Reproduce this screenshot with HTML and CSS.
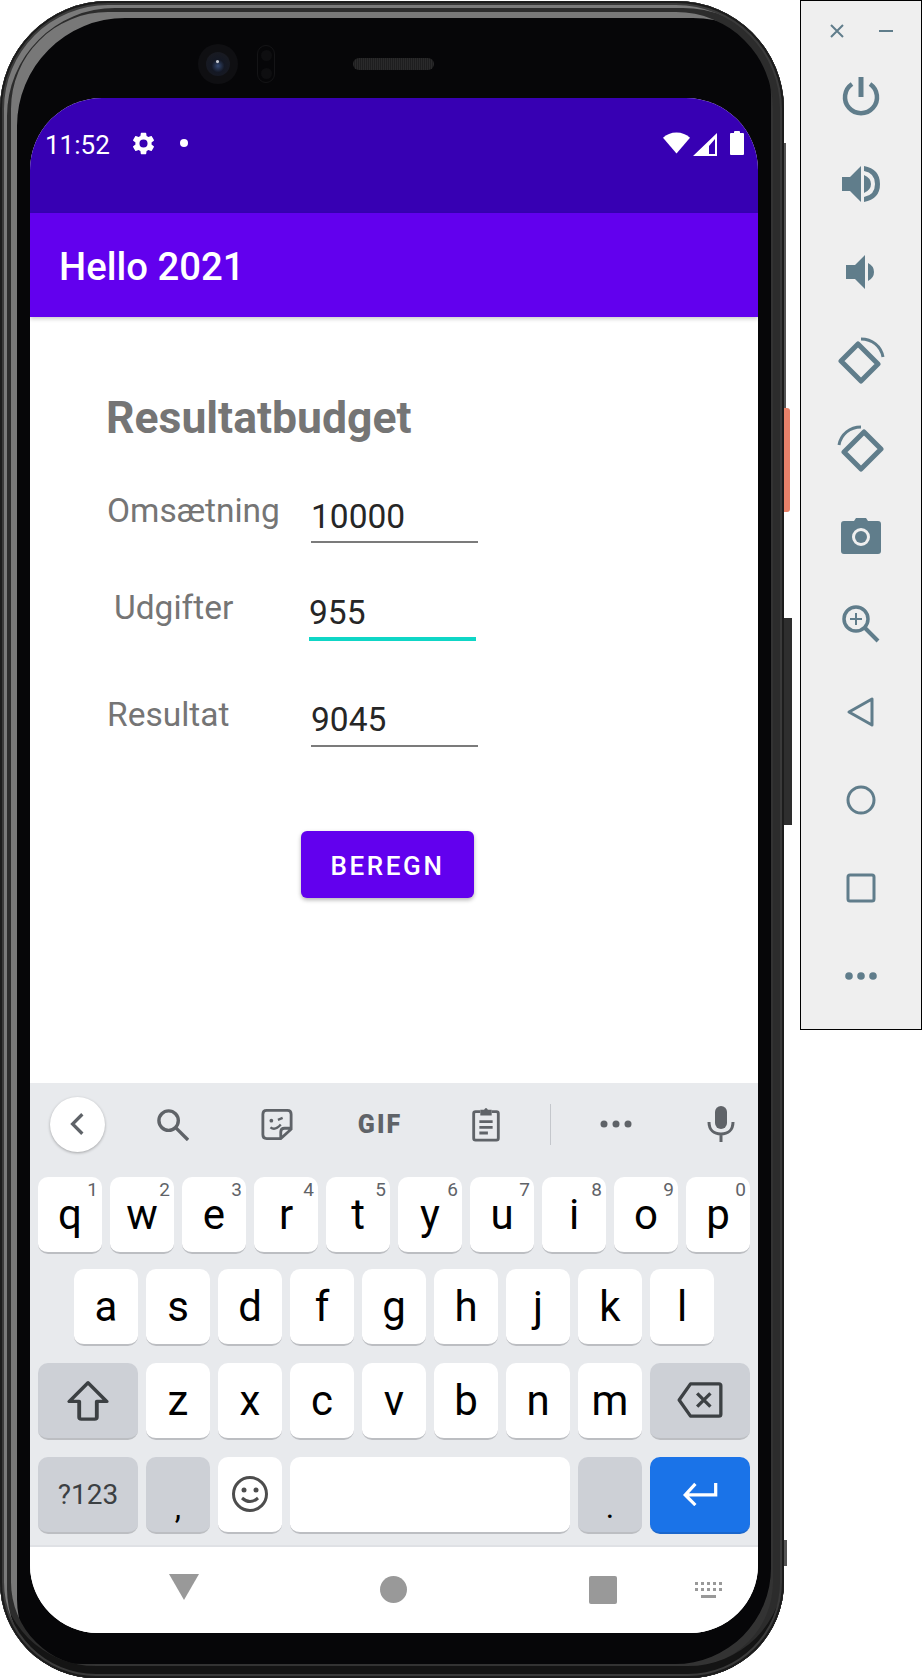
FILE: index.html
```html
<!DOCTYPE html>
<html lang="en">
<head>
    <meta charset="UTF-8">
    <meta name="viewport" content="width=device-width, initial-scale=1.0">
    <title>Hello 2021</title>
    <link rel="stylesheet" href="styles.css">
</head>
<body>
    <div class="phone">
        <span class="side-btn side-long"></span>
        <span class="side-btn side-power"></span>
        <span class="side-btn side-volume"></span>
        <span class="side-btn side-low"></span>

        <div class="bezel-top">
            <div class="camera"><span class="lens"></span></div>
            <div class="sensor"><span></span><span></span></div>
            <div class="speaker"></div>
        </div>

        <div class="screen">
            <div class="status-bar">
                <span class="clock">11:52</span>
                <svg class="status-gear" viewBox="0 0 24 24" width="27" height="27"><path fill="#fff" d="M19.14 12.94c.04-.3.06-.61.06-.94 0-.32-.02-.64-.07-.94l2.03-1.58a.49.49 0 0 0 .12-.61l-1.92-3.32a.488.488 0 0 0-.59-.22l-2.39.96c-.5-.38-1.03-.7-1.62-.94l-.36-2.54a.484.484 0 0 0-.48-.41h-3.84c-.24 0-.43.17-.47.41l-.36 2.54c-.59.24-1.13.57-1.62.94l-2.39-.96c-.22-.08-.47 0-.59.22L2.74 8.87c-.12.21-.08.47.12.61l2.03 1.58c-.05.3-.09.63-.09.94s.02.64.07.94l-2.03 1.58a.49.49 0 0 0-.12.61l1.92 3.32c.12.22.37.29.59.22l2.39-.96c.5.38 1.03.7 1.62.94l.36 2.54c.05.24.24.41.48.41h3.84c.24 0 .44-.17.47-.41l.36-2.54c.59-.24 1.13-.56 1.62-.94l2.39.96c.22.08.47 0 .59-.22l1.92-3.32c.12-.22.07-.47-.12-.61l-2.01-1.58zM12 15.6A3.6 3.6 0 1 1 12 8.4a3.6 3.6 0 0 1 0 7.2z"/></svg>
                <span class="status-dot"></span>
                <span class="status-fill"></span>
                <svg class="status-wifi" viewBox="0 0 28 24" width="27" height="24"><path fill="#fff" d="M0 6.500C3.500 3 8.500 1 14 1s10.500 2 14 5.500L14 23z"/></svg>
                <svg class="status-signal" viewBox="0 0 24 24" width="24" height="24"><path fill="#fff" fill-rule="evenodd" d="M24 0v23H0zM22 6L16 13v8h6z"/></svg>
                <svg class="status-battery" viewBox="0 0 14 24" width="14" height="24"><path fill="#fff" d="M4 2V1q0-1 1-1h4q1 0 1 1v1h3q1 0 1 1v20q0 1-1 1H1q-1 0-1-1V3q0-1 1-1z"/></svg>
            </div>
            <header class="app-bar">Hello 2021</header>

            <main class="form">
                <h1 class="form-title">Resultatbudget</h1>
                <div class="form-row row-revenue">
                    <label class="row-label">Omsætning</label>
                    <div class="field">10000</div>
                </div>
                <div class="form-row row-costs">
                    <label class="row-label">Udgifter</label>
                    <div class="field field-active">955</div>
                </div>
                <div class="form-row row-result">
                    <label class="row-label">Resultat</label>
                    <div class="field">9045</div>
                </div>
                <button class="calc-btn">BEREGN</button>
            </main>

            <div class="keyboard">
                <div class="kb-tools">
                    <span class="kb-back">
                        <svg viewBox="0 0 24 24" width="26" height="26"><path fill="none" stroke="#5f6368" stroke-width="3" d="M16 3l-9 9 9 9"/></svg>
                    </span>
                    <svg class="tool-search" viewBox="0 0 34 34" width="33" height="33"><circle cx="13" cy="13" r="10" fill="none" stroke="#5f6368" stroke-width="3.500"/><path stroke="#5f6368" stroke-width="3.500" d="M20 20l13 13"/></svg>
                    <svg class="tool-sticker" viewBox="0 0 34 34" width="32" height="33"><path fill="none" stroke="#5f6368" stroke-width="3" d="M6 2h22q4 0 4 4v16L21 32H6q-4 0-4-4V6q0-4 4-4zM32 21h-7q-4 0-4 4v7"/><circle cx="11" cy="13" r="2" fill="#5f6368"/><path fill="none" stroke="#5f6368" stroke-width="2.500" d="M18 12l5-2M10 20q5 4 11-3"/></svg>
                    <span class="tool-gif">GIF</span>
                    <svg class="tool-clip" viewBox="0 0 30 38" width="30" height="36"><path fill="none" stroke="#5f6368" stroke-width="3" d="M9 6H4q-2 0-2 2v26q0 2 2 2h22q2 0 2-2V8q0-2-2-2h-5"/><path fill="#5f6368" d="M9 4h4q2-4 4 0h4v6H9zM8 15h14v3H8zM8 21h14v3H8zM8 27h9v3H8z"/></svg>
                    <span class="tool-divider"></span>
                    <svg class="tool-dots" viewBox="0 0 32 8" width="32" height="8"><circle cx="4" cy="4" r="3.500" fill="#5f6368"/><circle cx="16" cy="4" r="3.500" fill="#5f6368"/><circle cx="28" cy="4" r="3.500" fill="#5f6368"/></svg>
                    <svg class="tool-mic" viewBox="0 0 28 36" width="28" height="36"><rect x="8" y="0" width="12" height="23" rx="6" fill="#5f6368"/><path fill="none" stroke="#5f6368" stroke-width="3" d="M2 16c0 8 5 12 12 12s12-4 12-12M14 28v8"/></svg>
                </div>
                <div class="kb-row kb-row-top">
                    <span class="key"><sup>1</sup>q</span>
                    <span class="key"><sup>2</sup>w</span>
                    <span class="key"><sup>3</sup>e</span>
                    <span class="key"><sup>4</sup>r</span>
                    <span class="key"><sup>5</sup>t</span>
                    <span class="key"><sup>6</sup>y</span>
                    <span class="key"><sup>7</sup>u</span>
                    <span class="key"><sup>8</sup>i</span>
                    <span class="key"><sup>9</sup>o</span>
                    <span class="key"><sup>0</sup>p</span>
                </div>
                <div class="kb-row kb-row-home">
                    <span class="key">a</span>
                    <span class="key">s</span>
                    <span class="key">d</span>
                    <span class="key">f</span>
                    <span class="key">g</span>
                    <span class="key">h</span>
                    <span class="key">j</span>
                    <span class="key">k</span>
                    <span class="key">l</span>
                </div>
                <div class="kb-row">
                    <span class="key key-wide key-grey">
                        <svg viewBox="0 0 40 44" width="44" height="41" preserveAspectRatio="none"><path fill="none" stroke="#3c4043" stroke-width="3.500" stroke-linejoin="round" d="M20 3L3 23h9v17q0 2 2 2h12q2 0 2-2V23h9z"/></svg>
                    </span>
                    <span class="key">z</span>
                    <span class="key">x</span>
                    <span class="key">c</span>
                    <span class="key">v</span>
                    <span class="key">b</span>
                    <span class="key">n</span>
                    <span class="key">m</span>
                    <span class="key key-wide key-grey">
                        <svg viewBox="0 0 48 38" width="46" height="36"><path fill="none" stroke="#3c4043" stroke-width="3.500" stroke-linejoin="round" d="M14 2h30q2 0 2 2v30q0 2-2 2H14L2 19z"/><path fill="none" stroke="#3c4043" stroke-width="3.500" d="M21 12l14 14M35 12L21 26"/></svg>
                    </span>
                </div>
                <div class="kb-row">
                    <span class="key key-wide key-grey key-sym">?123</span>
                    <span class="key key-grey key-mark">,</span>
                    <span class="key">
                        <svg viewBox="0 0 38 38" width="38" height="38"><circle cx="19" cy="19" r="16.500" fill="none" stroke="#4d4d4d" stroke-width="3"/><circle cx="13" cy="15" r="2.500" fill="#4d4d4d"/><circle cx="25" cy="15" r="2.500" fill="#4d4d4d"/><path fill="none" stroke="#4d4d4d" stroke-width="3" d="M11 23q8 7 16 0"/></svg>
                    </span>
                    <span class="key key-space"></span>
                    <span class="key key-grey key-mark">.</span>
                    <span class="key key-wide key-enter">
                        <svg viewBox="0 0 38 26" width="36" height="24"><path fill="none" stroke="#fff" stroke-width="3.500" d="M36 1v13H4M14 2L3 14l11 11"/></svg>
                    </span>
                </div>
            </div>

            <div class="nav-bar">
                <span class="nav-back"></span>
                <span class="nav-home"></span>
                <span class="nav-recent"></span>
                <svg class="nav-kb" viewBox="0 0 28 16" width="28" height="16"><path fill="#999" d="M0 0h3v3H0zM6 0h3v3H6zM12 0h3v3h-3zM18 0h3v3h-3zM24 0h3v3h-3zM0 6h3v3H0zM6 6h3v3H6zM12 6h3v3h-3zM18 6h3v3h-3zM24 6h3v3h-3zM6 13h15v3H6z"/></svg>
            </div>
        </div>
    </div>

    <aside class="emu-panel">
        <div class="emu-window">
            <svg viewBox="0 0 16 16" width="16" height="16"><path stroke="#607d8b" stroke-width="2" d="M2 2l12 12M14 2L2 14"/></svg>
            <svg viewBox="0 0 16 16" width="16" height="16"><path stroke="#607d8b" stroke-width="2" d="M1 8h14"/></svg>
        </div>
        <div class="emu-tools">
            <svg viewBox="0 0 40 40" width="40" height="40"><path fill="none" stroke="#607d8b" stroke-width="4.500" d="M11 8a16 16 0 1 0 18 0"/><path stroke="#607d8b" stroke-width="5" d="M20 1v20"/></svg>
            <svg viewBox="0 0 40 40" width="40" height="40"><path fill="#607d8b" d="M1 13h8L20 2v36L9 27H1zM23 11q7 3 7 9t-7 9zM23 2q16 3 16 18T23 38v-5q11-2 11-13T23 7z"/></svg>
            <svg viewBox="0 0 40 40" width="40" height="40"><path fill="#607d8b" d="M5 13h9L24 3v34L14 27H5zM27 11q6 3 6 9t-6 9z"/></svg>
            <svg viewBox="0 0 48 48" width="48" height="48"><path fill="none" stroke="#607d8b" stroke-width="5" stroke-linejoin="round" d="M21 8L4 25l20 20 17-17z"/><path fill="none" stroke="#607d8b" stroke-width="3" d="M24 3c11 0 20 7 22 18"/></svg>
            <svg viewBox="0 0 48 48" width="48" height="48"><path fill="none" stroke="#607d8b" stroke-width="5" stroke-linejoin="round" d="M27 8l17 17-20 20L7 28z"/><path fill="none" stroke="#607d8b" stroke-width="3" d="M24 3C13 3 4 10 2 21"/></svg>
            <svg viewBox="0 0 40 36" width="40" height="36"><path fill="#607d8b" fill-rule="evenodd" d="M13 3l2-3h10l2 3h10q3 0 3 3v27q0 3-3 3H3q-3 0-3-3V6q0-3 3-3zM20 10a9 9 0 1 0 0 18 9 9 0 0 0 0-18z"/><circle cx="20" cy="19" r="6" fill="#607d8b"/></svg>
            <svg viewBox="0 0 40 40" width="40" height="40"><circle cx="15" cy="15" r="12" fill="none" stroke="#607d8b" stroke-width="3.500"/><path stroke="#607d8b" stroke-width="4" d="M23 23l14 14"/><path stroke="#607d8b" stroke-width="2" d="M9 15h12M15 9v12"/></svg>
            <svg viewBox="0 0 30 32" width="30" height="32"><path fill="none" stroke="#607d8b" stroke-width="3" stroke-linejoin="round" d="M3 16L26 3v26z"/></svg>
            <svg viewBox="0 0 30 30" width="30" height="30"><circle cx="15" cy="15" r="13" fill="none" stroke="#607d8b" stroke-width="3"/></svg>
            <svg viewBox="0 0 30 30" width="30" height="30"><rect x="2" y="2" width="26" height="26" rx="2" fill="none" stroke="#607d8b" stroke-width="3"/></svg>
            <svg viewBox="0 0 32 8" width="32" height="8"><circle cx="4" cy="4" r="3.800" fill="#607d8b"/><circle cx="16" cy="4" r="3.800" fill="#607d8b"/><circle cx="28" cy="4" r="3.800" fill="#607d8b"/></svg>
        </div>
    </aside>
</body>
</html>
```

FILE: styles.css
```css
body {
    margin: 0;
    width: 922px;
    height: 1680px;
    overflow: hidden;
    background-color: white;
    font-family: Roboto, sans-serif;
    display: flex;
    align-items: flex-start;
}

/* device frame */
.phone {
    position: relative;
    box-sizing: border-box;
    flex: none;
    width: 784px;
    height: 1677px;
    margin-top: 1px;
    padding: 0 26px 0 30px;
    border-radius: 108px 108px 96px 96px;
    background-color: #060608;
    box-shadow:
        inset 0 0 0 2px #1c1c1c,
        inset 0 0 0 4px #3a3a3a,
        inset 7px 7px 0 0 #7a7a7a,
        inset 0 -12px 0 0 #141414,
        inset 0 0 0 11px #2c2c2c,
        inset 17px 17px 0 0 #787878,
        inset -13px -14px 0 0 #333;
}

.side-btn {
    position: absolute;
    left: 784px;
    background-color: #555;
}

.side-long { top: 142px; height: 265px; width: 2px; }
.side-power { top: 407px; height: 104px; width: 6px; border-radius: 0 3px 3px 0; background-color: #e8826a; }
.side-volume { top: 617px; height: 207px; width: 8px; background-color: #2e2e2e; }
.side-low { top: 1539px; height: 26px; width: 3px; }

.bezel-top {
    height: 97px;
    display: flex;
    align-items: center;
    padding-top: 29px;
    box-sizing: border-box;
}

.camera {
    width: 40px;
    height: 40px;
    margin-left: 168px;
    border-radius: 50%;
    background-color: #0f0f12;
    display: flex;
    align-items: center;
    justify-content: center;
}

.lens {
    width: 24px;
    height: 24px;
    border-radius: 50%;
    background:
        radial-gradient(circle at 48% 40%, #c4c8d0 0, #c4c8d0 1px, transparent 2px),
        radial-gradient(circle at 50% 58%, #33476e 0, #141824 35%, #1c1c20 100%);
}

.sensor {
    width: 18px;
    height: 38px;
    margin-left: 19px;
    border-radius: 9px;
    border: 1px solid #141416;
    box-sizing: border-box;
    display: flex;
    flex-direction: column;
    align-items: center;
    justify-content: space-around;
}

.sensor span {
    width: 11px;
    height: 11px;
    border-radius: 50%;
    background-color: #0e0e10;
}

.speaker {
    width: 81px;
    height: 12px;
    margin-left: 78px;
    border-radius: 6px;
    background: repeating-linear-gradient(90deg, #2a2a2b 0 1px, #1e1e1f 1px 2px);
}

.screen {
    width: 728px;
    height: 1535px;
    border-radius: 72px 72px 68px 68px;
    overflow: hidden;
    background-color: white;
    display: flex;
    flex-direction: column;
}

/* status bar */
.status-bar {
    height: 115px;
    background-color: #3700b3;
    color: white;
    display: flex;
    align-items: flex-start;
    padding: 31px 14px 0 15px;
    box-sizing: border-box;
    flex: none;
}

.clock {
    font-size: 26px;
    line-height: 32px;
    width: 85px;
}

.status-gear { margin-top: 1px; }

.status-dot {
    width: 8px;
    height: 8px;
    margin: 10px 0 0 23px;
    border-radius: 50%;
    background-color: white;
}

.status-fill { flex: 1; }

.status-wifi { margin-top: 2px; }
.status-signal { margin: 4px 0 0 3px; }
.status-battery { margin: 2px 0 0 13px; }

.app-bar {
    height: 104px;
    flex: none;
    background-color: #6200ee;
    color: white;
    font-size: 38.300px;
    font-weight: 500;
    line-height: 108px;
    padding-left: 29px;
    box-shadow: 0 2px 4px rgba(0, 0, 0, 0.2);
    position: relative;
}

/* form */
.form {
    flex: none;
    box-sizing: border-box;
    height: 766px;
    color: #757575;
    padding-left: 77px;
    display: flex;
    flex-direction: column;
    align-items: flex-start;
}

.form-title {
    margin: 76px 0 0 -1px;
    font-size: 44.500px;
    line-height: 50px;
    font-weight: 700;
}

.form-row {
    display: flex;
    align-items: flex-start;
}

.row-label {
    font-size: 33.500px;
    line-height: 38px;
    width: 204px;
}

.field {
    box-sizing: border-box;
    width: 167px;
    height: 48px;
    margin-top: 3px;
    border-bottom: 2px solid #7b7b7b;
    color: #262626;
    font-size: 33.500px;
    line-height: 44px;
}

.row-revenue { margin-top: 49px; }
.row-costs { margin-top: 46px; margin-left: 7px; }
.row-costs .row-label { width: 195px; }
.field-active {
    height: 50px;
    margin-top: 2px;
    border-bottom: 4px solid #0fd6c6;
}
.row-result { margin-top: 55px; }
.row-result .field { height: 49px; margin-top: 2px; }

.calc-btn {
    box-sizing: border-box;
    width: 173px;
    height: 67px;
    margin: 84px 0 0 194px;
    padding: 2px 0 0;
    border: 0;
    border-radius: 6px;
    background-color: #6200ee;
    color: white;
    font-family: Roboto, sans-serif;
    font-size: 26px;
    font-weight: 500;
    letter-spacing: 2.600px;
    box-shadow: 0 2px 4px rgba(0, 0, 0, 0.3);
}

/* keyboard */
.keyboard {
    flex: none;
    height: 464px;
    box-sizing: border-box;
    background-color: #e8eaed;
    border-bottom: 2px solid #dfe1e5;
    padding: 0 8px;
}

.kb-tools {
    height: 94px;
    box-sizing: border-box;
    padding-bottom: 12px;
    display: flex;
    align-items: center;
}

.kb-back {
    width: 55px;
    height: 55px;
    margin-left: 12px;
    border-radius: 50%;
    background-color: white;
    box-shadow: 0 1px 3px rgba(0, 0, 0, 0.3);
    display: flex;
    align-items: center;
    justify-content: center;
}

.tool-search { margin-left: 51px; }
.tool-sticker { margin-left: 72px; }

.tool-gif {
    width: 46px;
    margin-left: 64px;
    color: #5f6368;
    font-size: 25px;
    font-weight: 900;
    letter-spacing: 2px;
    text-align: center;
}

.tool-clip { margin-left: 68px; }

.tool-divider {
    width: 1px;
    height: 41px;
    margin-left: 49px;
    background-color: #c4c7cc;
}

.tool-dots { margin-left: 49px; }
.tool-mic { margin-left: 75px; }

.kb-row {
    display: flex;
    gap: 8px;
    height: 77px;
    margin-bottom: 17px;
}

.kb-row-top { margin-bottom: 15px; }
.kb-row-home { padding-left: 36px; }

.key {
    position: relative;
    box-sizing: border-box;
    flex: none;
    width: 64px;
    height: 77px;
    padding-bottom: 1px;
    border-radius: 10px;
    background-color: white;
    border-bottom: 2px solid #bcbec2;
    color: black;
    font-family: Roboto, sans-serif;
    font-size: 42px;
    display: flex;
    align-items: center;
    justify-content: center;
}

.key sup {
    position: absolute;
    top: 2px;
    right: 4px;
    font-size: 19px;
    line-height: 22px;
    color: #5f6368;
}

.key-wide { width: 100px; }
.key-grey { background-color: #cdd0d6; }
.key-sym { font-size: 28px; color: #3c4043; }
.key-mark { font-size: 32px; align-items: flex-end; padding-bottom: 6px; }
.key-space { width: 280px; }
.key-enter { background-color: #1a73e8; border-bottom-color: #1a66cc; }

/* navigation */
.nav-bar {
    flex: 1;
    background-color: white;
    display: flex;
    align-items: flex-start;
}

.nav-back {
    width: 30px;
    height: 26px;
    margin: 27px 0 0 139px;
    background-color: #999;
    clip-path: polygon(0 0, 100% 0, 50% 100%);
}

.nav-home {
    width: 27px;
    height: 27px;
    margin: 29px 0 0 181px;
    border-radius: 50%;
    background-color: #999;
}

.nav-recent {
    width: 28px;
    height: 28px;
    margin: 29px 0 0 182px;
    border-radius: 2px;
    background-color: #999;
}

.nav-kb { margin: 35px 0 0 78px; }

/* emulator side panel */
.emu-panel {
    box-sizing: border-box;
    flex: none;
    width: 122px;
    height: 1030px;
    margin-left: 16px;
    border: 1px solid black;
    background-color: #efefef;
    display: flex;
    flex-direction: column;
    align-items: center;
}

.emu-window {
    display: flex;
    gap: 33px;
    margin-top: 22px;
}

.emu-tools {
    display: grid;
    grid-auto-rows: 88px;
    justify-items: center;
    align-items: center;
    margin-top: 13px;
}
```
